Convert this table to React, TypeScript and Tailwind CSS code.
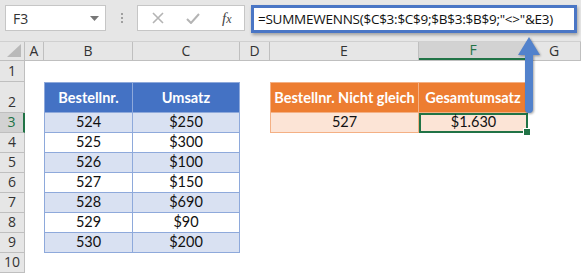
import React from "react";

// column widths of the sheet (px)
const cols = [
  { key: "A", w: "w-[19px]" },
  { key: "B", w: "w-[89px]" },
  { key: "C", w: "w-[107px]" },
  { key: "D", w: "w-[30px]" },
  { key: "E", w: "w-[149px]" },
  { key: "F", w: "w-[109px]" },
  { key: "G", w: "flex-1" },
];

const rowHeights: Record<number, string> = {
  1: "h-[21px]",
  2: "h-[31px]",
};

const orders = [
  ["524", "$250"],
  ["525", "$300"],
  ["526", "$100"],
  ["527", "$150"],
  ["528", "$690"],
  ["529", "$90"],
  ["530", "$200"],
];

const cellFont = "font-['Lato','Liberation_Sans',sans-serif] text-[14.5px] text-[#111]";

function cellFor(row: number, col: string) {
  // left table B2:C9
  if ((col === "B" || col === "C") && row >= 2 && row <= 9) {
    const first = col === "B" ? "border-l" : "";
    if (row === 2) {
      return {
        cls: `bg-[#4472c4] border-[#8ea9db] border-t border-r border-b ${first} items-center text-white font-bold`,
        text: col === "B" ? "Bestellnr." : "Umsatz",
      };
    }
    const data = orders[row - 3];
    const bg = row % 2 === 1 ? "bg-[#d9e1f2]" : "bg-white";
    return {
      cls: `${bg} border-[#8ea9db] border-r border-b ${first} items-end pb-[1px]`,
      text: col === "B" ? data[0] : data[1],
    };
  }
  // right table E2:F3
  if ((col === "E" || col === "F") && (row === 2 || row === 3)) {
    const first = col === "E" ? "border-l" : "";
    if (row === 2) {
      return {
        cls: `bg-[#ed7d31] border-[#f4b084] border-t border-r border-b ${first} items-center text-white font-bold`,
        text: col === "E" ? "Bestellnr. Nicht gleich" : "Gesamtumsatz",
      };
    }
    if (col === "F") {
      return {
        cls: "bg-[#fce4d6] border-2 border-[#217346] items-end relative",
        text: "$1.630",
        handle: true,
      };
    }
    return {
      cls: `bg-[#fce4d6] border-[#f4b084] border-r border-b ${first} items-end pb-[1px]`,
      text: "527",
    };
  }
  return { cls: "bg-white", text: "" };
}

function FormulaBar() {
  return (
    <div className="flex h-[42px] items-start bg-[#e6e6e6] pt-[5px] pl-[5px] border-b border-[#d0d0d0]">
      <div className="flex h-[26px] w-[101px] items-center justify-between border border-[#c6c6c6] bg-white pl-[7px] pr-[6px] font-['Open_Sans','Liberation_Sans',sans-serif] text-[14px] text-[#333]">
        <span>F3</span>
        <svg width="9" height="5" viewBox="0 0 9 5">
          <path d="M0 0h9L4.5 5z" fill="#777" />
        </svg>
      </div>
      <div className="flex w-[31px] flex-col items-center justify-center gap-[2px] pt-[8px]">
        <span className="h-[2px] w-[2px] bg-[#a0a0a0]" />
        <span className="h-[2px] w-[2px] bg-[#a0a0a0]" />
        <span className="h-[2px] w-[2px] bg-[#a0a0a0]" />
      </div>
      <div className="flex h-[26px] w-[108px] items-center border border-[#c6c6c6] bg-white">
        <svg className="ml-[14px]" width="12" height="12" viewBox="0 0 12 12">
          <path d="M1 1l10 10M11 1L1 11" stroke="#b4b4b4" strokeWidth="1.6" />
        </svg>
        <svg className="ml-[22px]" width="14" height="11" viewBox="0 0 14 11">
          <path d="M1 6l4 4 8-9" stroke="#b4b4b4" strokeWidth="2" fill="none" />
        </svg>
        <span className="ml-[22px] font-['Liberation_Serif',serif] text-[15px] italic text-[#444]">
          f<span className="text-[12px]">x</span>
        </span>
      </div>
      <div className="ml-[6px] flex h-[28px] w-[326px] items-center border-[3px] border-[#4a76c5] bg-white pl-[4px] shadow-[1px_2px_3px_rgba(0,0,0,0.3)] font-['Open_Sans','Liberation_Sans',sans-serif] text-[13.5px] tracking-[-0.25px] text-[#111] whitespace-nowrap">
        =SUMMEWENNS($C$3:$C$9;$B$3:$B$9;"&lt;&gt;"&amp;E3)
      </div>
    </div>
  );
}

function ColumnHeaders() {
  return (
    <div className="flex h-[19px] bg-[#e6e6e6] border-b border-[#bfbfbf] font-['Open_Sans','Liberation_Sans',sans-serif] text-[14px] text-[#333]">
      <div className="relative w-[25px] border-r border-[#bfbfbf]">
        <svg className="absolute right-[3px] bottom-[3px]" width="14" height="13" viewBox="0 0 14 13">
          <path d="M14 0V13H0z" fill="#b9b9b9" />
        </svg>
      </div>
      {cols.map((c) => (
        <div
          key={c.key}
          className={`${c.w} flex items-center justify-center border-r border-[#bfbfbf] leading-none ${
            c.key === "F" ? "bg-[#d2d2d2] border-b-2 border-b-[#217346] text-[#217346]" : ""
          }`}
        >
          {c.key}
        </div>
      ))}
    </div>
  );
}

function SheetRow({ row }: { row: number }) {
  const h = rowHeights[row] ?? "h-[20px]";
  const active = row === 3;
  return (
    <div className={`flex ${h}`}>
      <div
        className={`flex w-[25px] items-end justify-center border-r border-b border-[#bfbfbf] pb-[1px] font-['Open_Sans','Liberation_Sans',sans-serif] text-[14px] leading-[18px] ${
          active ? "bg-[#d2d2d2] text-[#217346] border-r-2 border-r-[#217346]" : "bg-[#e6e6e6] text-[#333]"
        }`}
      >
        {row}
      </div>
      {cols.map((c) => {
        const cell = cellFor(row, c.key);
        return (
          <div
            key={c.key}
            className={`${c.w} flex justify-center leading-[18px] whitespace-nowrap ${cellFont} ${cell.cls}`}
          >
            {cell.text}
            {"handle" in cell && cell.handle && (
              <span className="absolute right-[-4px] bottom-[-4px] h-[6px] w-[6px] bg-[#217346] outline outline-1 outline-white" />
            )}
          </div>
        );
      })}
    </div>
  );
}

export default function App() {
  const rows = [1, 2, 3, 4, 5, 6, 7, 8, 9, 10];
  return (
    <div className="relative h-[274px] w-[581px] overflow-hidden bg-white">
      <FormulaBar />
      <ColumnHeaders />
      {rows.map((r) => (
        <SheetRow key={r} row={r} />
      ))}
      {/* pointer from the result cell up to the formula */}
      <svg
        className="absolute left-[517px] top-[36px] drop-shadow-[1px_1px_1px_rgba(0,0,0,0.35)]"
        width="24"
        height="80"
        viewBox="0 0 24 80"
      >
        <path d="M12 1L23 19H16V73a4 4 0 0 1-8 0V19H1z" fill="#5282cc" />
      </svg>
    </div>
  );
}
